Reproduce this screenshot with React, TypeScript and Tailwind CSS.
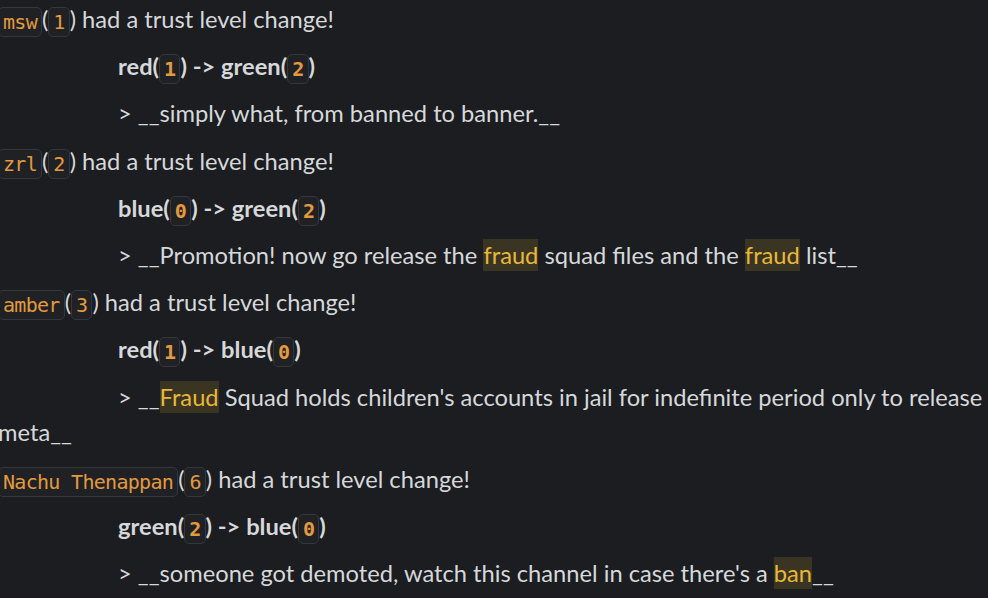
import React from "react";

const Code = ({ children }: { children: React.ReactNode }) => (
  <code className="inline-block indent-0 rounded-[5px] border border-[#34373c] bg-[#1f2125] px-[4px] text-[20px] tracking-[-0.7px] leading-[28px] text-[#e39a3f] align-middle [font-family:'DejaVu_Sans_Mono','Liberation_Mono',monospace]">
    {children}
  </code>
);

const Hi = ({ children }: { children: React.ReactNode }) => (
  <span className="bg-[#3a3422] text-[#e9b739] py-[2px]">{children}</span>
);

const Header = ({ name, n }: { name: string; n: string }) => (
  <p className="mb-[12.2px]">
    <Code>{name}</Code>(<Code>{n}</Code>) had a trust level change!
  </p>
);

const Change = ({ a, an, b, bn }: { a: string; an: string; b: string; bn: string }) => (
  <p className="mb-[12.2px] indent-[120px] font-bold">
    {a}(<Code>{an}</Code>) -&gt; {b}(<Code>{bn}</Code>)
  </p>
);

const Quote = ({ children }: { children: React.ReactNode }) => (
  <p className="mb-[12.2px] indent-[120px]">{children}</p>
);

export default function App() {
  return (
    <div className="w-[988px] h-[598px] overflow-hidden bg-[#1b1d21]">
      <div className="ml-[-2px] pt-[2px] w-[992px] text-[23.7px] leading-[35px] text-[#d6d8da] [font-family:Lato,'Noto_Sans',sans-serif]">
        <Header name="msw" n="1" />
        <Change a="red" an="1" b="green" bn="2" />
        <Quote>&gt; __simply what, from banned to banner.__</Quote>
        <Header name="zrl" n="2" />
        <Change a="blue" an="0" b="green" bn="2" />
        <Quote>
          &gt; __Promotion! now go release the <Hi>fraud</Hi> squad files and the <Hi>fraud</Hi> list__
        </Quote>
        <Header name="amber" n="3" />
        <Change a="red" an="1" b="blue" bn="0" />
        <Quote>
          &gt; __<Hi>Fraud</Hi> Squad holds children's accounts in jail for indefinite period only to release meta__
        </Quote>
        <Header name="Nachu Thenappan" n="6" />
        <Change a="green" an="2" b="blue" bn="0" />
        <Quote>
          &gt; __someone got demoted, watch this channel in case there's a <Hi>ban</Hi>__
        </Quote>
      </div>
    </div>
  );
}
